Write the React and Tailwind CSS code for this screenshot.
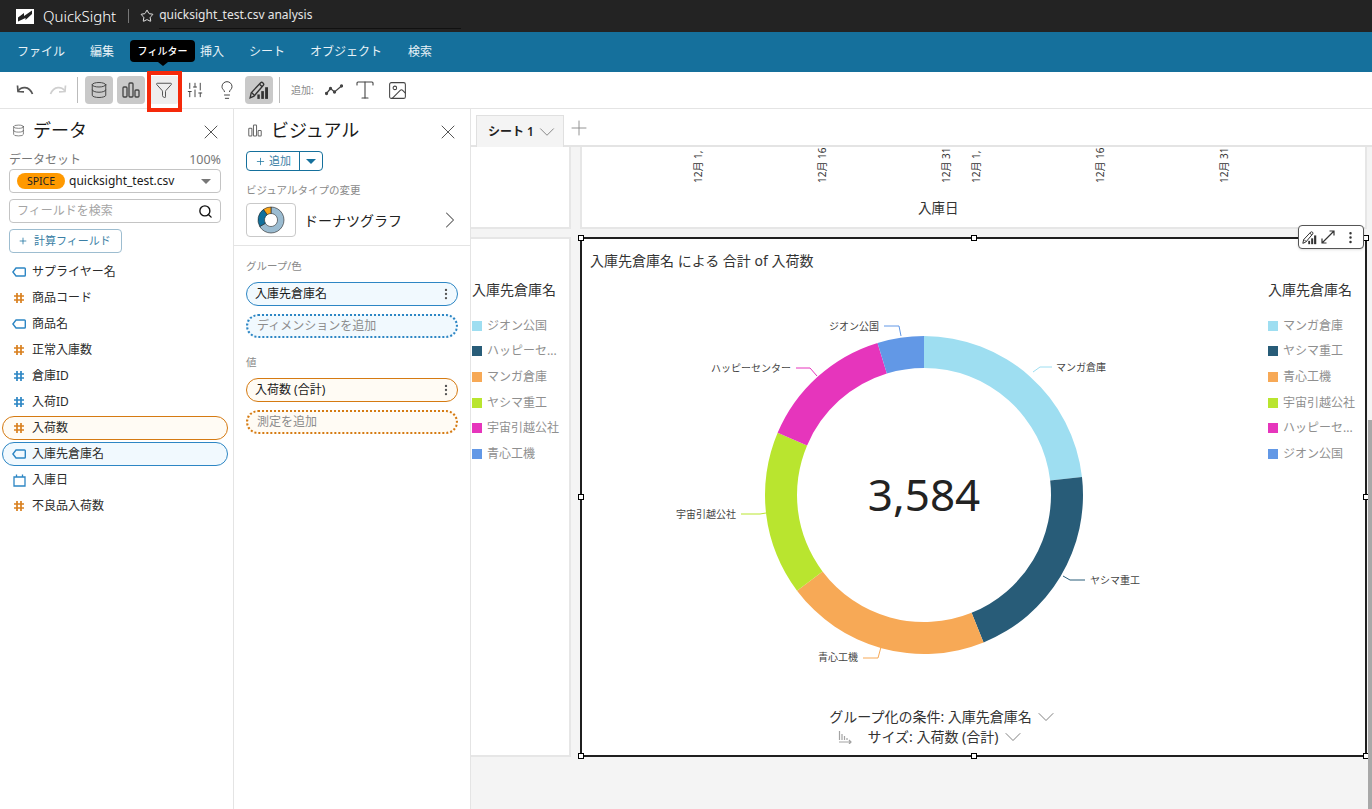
import { X, Search, ChevronRight, ChevronDown, Plus, Star, Database, Lightbulb, Image, Type, Funnel, SlidersVertical, MoreVertical } from "lucide-react";

const navItems = ["ファイル", "編集", "データ", "挿入", "シート", "オブジェクト", "検索"];

const fields = [
  { name: "サプライヤー名", type: "tag" },
  { name: "商品コード", type: "hash", color: "orange" },
  { name: "商品名", type: "tag" },
  { name: "正常入庫数", type: "hash", color: "orange" },
  { name: "倉庫ID", type: "hash", color: "blue" },
  { name: "入荷ID", type: "hash", color: "blue" },
  { name: "入荷数", type: "hash", color: "orange", active: "orange" },
  { name: "入庫先倉庫名", type: "tag", active: "blue" },
  { name: "入庫日", type: "date" },
  { name: "不良品入荷数", type: "hash", color: "orange" },
];

const MANGA = "#9edef1";
const YASHIMA = "#285c78";
const SEISHIN = "#f7a956";
const UCHU = "#b9e52f";
const HAPPY = "#e635bc";
const ZION = "#6298e6";

const leftLegend = [
  { label: "ジオン公国", swatch: "bg-[#9edef1]" },
  { label: "ハッピーセ...", swatch: "bg-[#285c78]" },
  { label: "マンガ倉庫", swatch: "bg-[#f7a956]" },
  { label: "ヤシマ重工", swatch: "bg-[#b9e52f]" },
  { label: "宇宙引越公社", swatch: "bg-[#e635bc]" },
  { label: "青心工機", swatch: "bg-[#6298e6]" },
];

const rightLegend = [
  { label: "マンガ倉庫", swatch: "bg-[#9edef1]" },
  { label: "ヤシマ重工", swatch: "bg-[#285c78]" },
  { label: "青心工機", swatch: "bg-[#f7a956]" },
  { label: "宇宙引越公社", swatch: "bg-[#b9e52f]" },
  { label: "ハッピーセ...", swatch: "bg-[#e635bc]" },
  { label: "ジオン公国", swatch: "bg-[#6298e6]" },
];

// angles are degrees clockwise from 12 o'clock
const segments = [
  { from: 0, to: 83.5, color: MANGA },
  { from: 83.5, to: 158, color: YASHIMA },
  { from: 158, to: 233, color: SEISHIN },
  { from: 233, to: 293, color: UCHU },
  { from: 293, to: 343, color: HAPPY },
  { from: 343, to: 360, color: ZION },
];

const callouts = [
  { label: "マンガ倉庫", x: 1056, y: 367, anchor: "start", points: "1033,372 1040,367 1052,367", color: MANGA },
  { label: "ヤシマ重工", x: 1090, y: 580, anchor: "start", points: "1063,576 1070,580 1085,580", color: YASHIMA },
  { label: "青心工機", x: 858, y: 657, anchor: "end", points: "863,658 878,658 881,647", color: SEISHIN },
  { label: "宇宙引越公社", x: 736, y: 514, anchor: "end", points: "741,514 760,514 766,513", color: UCHU },
  { label: "ハッピーセンター", x: 791, y: 368, anchor: "end", points: "796,368 810,368 817,376", color: HAPPY },
  { label: "ジオン公国", x: 879, y: 326, anchor: "end", points: "884,326 899,326 901,336", color: ZION },
];

function arc(cx, cy, outer, inner, from, to) {
  const pt = (r, a) => {
    const rad = ((a - 90) * Math.PI) / 180;
    return `${(cx + r * Math.cos(rad)).toFixed(2)} ${(cy + r * Math.sin(rad)).toFixed(2)}`;
  };
  const large = to - from > 180 ? 1 : 0;
  return `M${pt(outer, from)} A${outer} ${outer} 0 ${large} 1 ${pt(outer, to)} L${pt(inner, to)} A${inner} ${inner} 0 ${large} 0 ${pt(inner, from)} Z`;
}

function TagIcon() {
  return (
    <svg width="14" height="10" viewBox="0 0 14 10" fill="none" stroke="#2d86c4" strokeWidth="1.4" className="shrink-0">
      <path d="M4 1h8.500a.8.8 0 0 1 .8.8v6.400a.8.8 0 0 1-.8.8H4L.9 5z" />
    </svg>
  );
}

function HashIcon({ color }) {
  const stroke = color === "orange" ? "#d9801f" : "#2d86c4";
  return (
    <svg width="12" height="12" viewBox="0 0 12 12" fill="none" stroke={stroke} strokeWidth="1.7" className="shrink-0">
      <path d="M4 1v10M8 1v10M1 4h10M1 8h10" />
    </svg>
  );
}

function DateIcon() {
  return (
    <svg width="13" height="13" viewBox="0 0 13 13" fill="none" stroke="#2d86c4" strokeWidth="1.3" className="shrink-0">
      <path d="M1 3h11v9H1zM3.500 .5v3M9.500 .5v3" />
    </svg>
  );
}

function BarsIcon({ width = 18, height = 16, color = "#444" }) {
  return (
    <svg width={width} height={height} viewBox="0 0 18 16" fill="none" stroke={color} strokeWidth="1.3">
      <rect x="1" y="5" width="4" height="10" rx="1" />
      <rect x="7" y="1" width="4" height="14" rx="1" />
      <rect x="13" y="8" width="4" height="7" rx="1" />
    </svg>
  );
}

function BrushBarsIcon({ size = 20 }) {
  return (
    <svg width={size} height={size} viewBox="0 0 18 18" fill="none" stroke="#333" strokeWidth="1.2">
      <path d="M1 16l1-4.500L10.500 2.500c1.200-1.200 3.600.8 2.400 2.200L4.500 14.500z" />
      <path d="M2.500 11.500l2.500 2.500M9.500 3.800l2.300 2.200" />
      <rect x="7.500" y="13" width="2.200" height="4" fill="#333" stroke="none" />
      <rect x="11" y="10" width="2.400" height="7" fill="#333" stroke="none" />
      <rect x="14.500" y="6.500" width="2.600" height="10.500" fill="#333" stroke="none" />
    </svg>
  );
}

function LineChartIcon() {
  return (
    <svg width="18" height="12" viewBox="0 0 18 12" fill="none" stroke="#444" strokeWidth="1.3">
      <path d="M1.500 9.500l4-5 4 3.500 7-6" />
      <circle cx="1.500" cy="9.500" r="1" fill="#444" />
      <circle cx="5.500" cy="4.500" r="1" fill="#444" />
      <circle cx="9.500" cy="8" r="1" fill="#444" />
      <circle cx="16.500" cy="2" r="1" fill="#444" />
    </svg>
  );
}

function UndoIcon() {
  return (
    <svg width="18" height="14" viewBox="0 0 18 14" fill="none" stroke="#555" strokeWidth="1.7">
      <path d="M2 8C5 3.500 13 2.500 16.500 11" />
      <path d="M1.500 2.500l.5 6 6 .3" />
    </svg>
  );
}

function RedoIcon() {
  return (
    <svg width="18" height="14" viewBox="0 0 18 14" fill="none" stroke="#cfcfcf" strokeWidth="1.7">
      <path d="M16 8C13 3.500 5 2.500 1.500 11" />
      <path d="M16.500 2.500l-.5 6-6 .3" />
    </svg>
  );
}

function Logo() {
  return (
    <svg width="18" height="15" viewBox="0 0 18 15">
      <rect width="18" height="15" fill="#fff" />
      <path d="M2 12.500V8.500L8 4v3l8-5.500v3.500L9.500 11V9z" fill="#232323" />
    </svg>
  );
}

function DonutThumb() {
  return (
    <svg width="28" height="28" viewBox="0 0 28 28">
      <path d={arc(14, 14, 13, 6.5, 0, 240)} fill="#9bbcd1" stroke="#222" strokeWidth="0.6" />
      <path d={arc(14, 14, 13, 6.5, 240, 325)} fill="#11709c" stroke="#222" strokeWidth="0.6" />
      <path d={arc(14, 14, 13, 6.5, 325, 360)} fill="#f9a51a" stroke="#222" strokeWidth="0.6" />
    </svg>
  );
}

function FieldRow({ field }) {
  const pill =
    field.active === "orange"
      ? "border-[#d57a12] bg-[#fffbf4] rounded-full"
      : field.active === "blue"
      ? "border-[#2d86c4] bg-[#f1f9fe] rounded-full"
      : "border-transparent";
  return (
    <div className={`h-[24px] mb-[2px] w-[226px] ml-[2px] flex items-center gap-[6px] pl-[9px] border ${pill}`}>
      <span className="w-[14px] flex justify-center">
        {field.type === "tag" && <TagIcon />}
        {field.type === "hash" && <HashIcon color={field.color} />}
        {field.type === "date" && <DateIcon />}
      </span>
      <span className="text-[12px] text-[#2b2b2b]">{field.name}</span>
    </div>
  );
}

function Well({ label, tone }) {
  const cls = tone === "orange" ? "border-[#d57a12] bg-[#fffbf4]" : "border-[#2d86c4] bg-[#f1f9fe]";
  return (
    <div className={`h-[24px] w-[212px] rounded-full border flex items-center justify-between pl-[8px] pr-[4px] ${cls}`}>
      <span className="text-[12px] text-[#1a1a1a]">{label}</span>
      <MoreVertical size={14} strokeWidth={2} className="text-[#555]" />
    </div>
  );
}

function DropWell({ label, tone }) {
  const cls = tone === "orange" ? "border-[#d57a12] bg-[#fffbf4]" : "border-[#2d86c4] bg-[#f1f9fe]";
  return (
    <div className={`h-[24px] w-[212px] rounded-full border-2 border-dotted flex items-center pl-[9px] ${cls}`}>
      <span className="text-[12px] text-[#8c8c8c]">{label}</span>
    </div>
  );
}

function Legend({ items }) {
  return (
    <div>
      <div className="text-[14px] leading-[20px] text-[#333] mb-[13px]">入庫先倉庫名</div>
      {items.map((item) => (
        <div key={item.label} className="h-[25.6px] flex items-center gap-[5px]">
          <span className={`w-[10px] h-[10px] shrink-0 ${item.swatch}`} />
          <span className="text-[12px] text-[#8f8f8f] whitespace-nowrap">{item.label}</span>
        </div>
      ))}
    </div>
  );
}

function Handle({ className }) {
  return <span className={`absolute w-[6px] h-[6px] bg-white border border-black ${className}`} />;
}

function Tick({ className, children }) {
  return (
    <span className={`absolute top-[-20px] h-[56px] flex items-center text-[10px] text-[#333] [writing-mode:vertical-rl] [text-orientation:sideways] rotate-180 justify-start whitespace-nowrap ${className}`}>
      {children}
    </span>
  );
}

export default function App() {
  return (
    <div className="w-[1372px] h-[809px] overflow-hidden flex flex-col relative bg-white [font-family:'Noto_Sans','Noto_Sans_CJK_JP',sans-serif]">
      {/* top bar */}
      <div className="h-[32px] shrink-0 bg-[#232323] flex items-center text-white">
        <span className="ml-[16px]">
          <Logo />
        </span>
        <span className="ml-[9px] text-[15px] font-light">QuickSight</span>
        <span className="ml-[12px] w-px h-[14px] bg-[#777]" />
        <Star size={14} strokeWidth={1.5} className="ml-[11px]" />
        <div className="ml-[5px] w-[302px] h-[26px] pt-[2px] border-b border-[#111] text-[12px] leading-[20px] text-[#e6e6e6]">quicksight_test.csv analysis</div>
      </div>

      {/* menu, the third item sits under the tooltip */}
      <div className="h-[40px] shrink-0 bg-[#15709c] flex items-center gap-[25px] pl-[17px] text-[12px] text-[#e8f2f7]">
        {navItems.map((item) => (
          <span key={item} className={item === "データ" ? "invisible" : "last:ml-px"}>
            {item}
          </span>
        ))}
      </div>

      {/* toolbar */}
      <div className="h-[37px] shrink-0 bg-white border-b border-[#e4e4e4] flex items-center pl-[16px] text-[#444]">
        <UndoIcon />
        <span className="ml-[15px]">
          <RedoIcon />
        </span>
        <span className="ml-[10px] w-px h-[26px] bg-[#bbb]" />
        <span className="ml-[7px] w-[28px] h-[28px] rounded-[4px] bg-[#c9c9c9] flex items-center justify-center">
          <Database size={18} strokeWidth={1.3} />
        </span>
        <span className="ml-[4px] w-[28px] h-[28px] rounded-[4px] bg-[#c9c9c9] flex items-center justify-center">
          <BarsIcon />
        </span>
        <span className="ml-[5px] w-[28px] h-[28px] rounded-[2px] bg-[#eeeeee] flex items-center justify-center">
          <Funnel size={18} strokeWidth={1.2} />
        </span>
        <SlidersVertical size={18} strokeWidth={1.3} className="ml-[8px]" />
        <Lightbulb size={20} strokeWidth={1.2} className="ml-[13px]" />
        <span className="ml-[8px] w-[28px] h-[28px] rounded-[4px] bg-[#c9c9c9] flex items-center justify-center">
          <BrushBarsIcon />
        </span>
        <span className="ml-[6px] w-px h-[26px] bg-[#bbb]" />
        <span className="ml-[11px] text-[10px] text-[#8a8a8a]">追加:</span>
        <span className="ml-[11px]">
          <LineChartIcon />
        </span>
        <Type size={24} strokeWidth={1.1} className="ml-[10px]" />
        <Image size={21} strokeWidth={1.2} className="ml-[10px]" />
      </div>

      {/* body */}
      <div className="flex-1 min-h-0 flex">
        {/* data panel */}
        <aside className="w-[234px] shrink-0 border-r border-[#e4e4e4] pt-[8px]">
          <div className="flex items-center h-[26px] pl-[12px] pr-[10px]">
            <Database size={13} strokeWidth={1.3} className="text-[#555]" />
            <span className="ml-[8px] text-[18px] text-[#1a1a1a]">データ</span>
            <X size={24} strokeWidth={1} className="ml-auto mt-[3px] text-[#555]" />
          </div>
          <div className="ml-[9px] w-[212px] mt-[8px] flex justify-between items-center h-[18px] text-[12px] text-[#777]">
            <span>データセット</span>
            <span className="text-[12.500px]">100%</span>
          </div>
          <div className="ml-[9px] w-[212px] h-[24px] rounded-[4px] border border-[#c4c4c4] flex items-center pl-[7px] pr-[9px]">
            <span className="w-[48px] h-[16px] rounded-full bg-[#ff9900] text-[10.500px] leading-[16px] text-center text-[#222]">SPICE</span>
            <span className="ml-[4px] text-[12px] text-[#1a1a1a]">quicksight_test.csv</span>
            <span className="ml-auto w-0 h-0 border-x-[5.500px] border-x-transparent border-t-[5px] border-t-[#777]" />
          </div>
          <div className="ml-[9px] mt-[6px] w-[212px] h-[24px] rounded-[4px] border border-[#c4c4c4] flex items-center justify-between pl-[7px] pr-[7px]">
            <span className="text-[12px] text-[#a5a5a5]">フィールドを検索</span>
            <Search size={15} strokeWidth={2.2} className="text-[#111]" />
          </div>
          <div className="ml-[9px] mt-[6px] w-[113px] h-[24px] rounded-[4px] border border-[#9dbdd0] flex items-center pl-[8px]">
            <Plus size={10} strokeWidth={1.8} className="text-[#15709c]" />
            <span className="ml-[6px] text-[11px] text-[#3b7fa5]">計算フィールド</span>
          </div>
          <div className="mt-[7px]">
            {fields.map((field) => (
              <FieldRow key={field.name} field={field} />
            ))}
          </div>
        </aside>

        {/* visual panel */}
        <aside className="w-[237px] shrink-0 border-r border-[#e4e4e4] pt-[8px]">
          <div className="flex items-center h-[26px] pl-[14px] pr-[10px]">
            <BarsIcon width={14} height={13} color="#666" />
            <span className="ml-[9px] text-[18px] text-[#1a1a1a]">ビジュアル</span>
            <X size={24} strokeWidth={1} className="ml-auto mt-[3px] text-[#555]" />
          </div>
          <div className="ml-[12px] mt-[8px] w-[77px] h-[20px] rounded-[4px] border border-[#15709c] flex items-center">
            <span className="w-[53px] h-full flex items-center justify-center gap-[3px] border-r border-[#15709c]">
              <Plus size={11} strokeWidth={1.6} className="text-[#15709c]" />
              <span className="text-[11px] text-[#3b7fa5]">追加</span>
            </span>
            <span className="flex-1 flex justify-center">
              <span className="w-0 h-0 border-x-[5px] border-x-transparent border-t-[5px] border-t-[#15709c]" />
            </span>
          </div>
          <div className="ml-[12px] mt-[11px] text-[10.5px] leading-[16px] text-[#8a8a8a]">ビジュアルタイプの変更</div>
          <div className="ml-[12px] mt-[5px] pr-[6px] flex items-center">
            <span className="w-[50px] h-[34px] rounded-[4px] border border-[#c9c9c9] flex items-center justify-center">
              <DonutThumb />
            </span>
            <span className="ml-[8px] text-[14px] text-[#222]">ドーナツグラフ</span>
            <ChevronRight size={28} strokeWidth={0.9} className="ml-auto text-[#555]" />
          </div>
          <div className="h-[8px]" />
          <div className="border-t border-[#e4e4e4] pl-[12px]">
            <div className="mt-[12px] text-[10.5px] leading-[16px] text-[#8a8a8a]">グループ/色</div>
            <div className="mt-[8px] flex flex-col gap-[8px]">
              <Well label="入庫先倉庫名" tone="blue" />
              <DropWell label="ディメンションを追加" tone="blue" />
            </div>
            <div className="mt-[16px] text-[10.5px] leading-[16px] text-[#8a8a8a]">値</div>
            <div className="mt-[8px] flex flex-col gap-[8px]">
              <Well label="入荷数 (合計)" tone="orange" />
              <DropWell label="測定を追加" tone="orange" />
            </div>
          </div>
        </aside>

        {/* canvas */}
        <main className="flex-1 min-w-0 bg-[#f4f4f4] flex flex-col">
          <div className="h-[38px] shrink-0 bg-white border-b-2 border-[#e4e4e4] flex items-end pl-[5px]">
            <div className="w-[88px] h-[32px] -mb-[2px] bg-[#f4f4f4] border border-b-0 border-[#e0e0e0] flex items-center pl-[11px]">
              <span className="text-[12px] font-semibold text-[#222]">シート 1</span>
              <ChevronDown size={26} strokeWidth={0.8} className="text-[#777]" />
            </div>
            <Plus size={24} strokeWidth={0.9} className="ml-[3px] mb-[5px] text-[#888]" />
          </div>

          <div className="grid grid-cols-[100px_787px] grid-rows-[82px_520px] gap-x-[9px] gap-y-[8px]">
            <div className="bg-white border-r-[2px] border-b-[2px] border-[#e6e6e6]" />
            <div className="relative overflow-hidden bg-white border-l-[2px] border-r-[2px] border-b-[2px] border-[#e6e6e6]">
              <Tick className="left-[109px]">12月 1,</Tick>
              <Tick className="left-[233px]">12月 16</Tick>
              <Tick className="left-[357px]">12月 31</Tick>
              <Tick className="left-[387px]">12月 1,</Tick>
              <Tick className="left-[511px]">12月 16</Tick>
              <Tick className="left-[635px]">12月 31</Tick>
              <div className="absolute left-[336px] top-[51px] text-[13.500px] text-[#333]">入庫日</div>
            </div>

            <div className="bg-white border-r-[2px] border-b-[2px] border-t-[2px] border-[#e6e6e6] pl-[1px] pt-[41px]">
              <Legend items={leftLegend} />
            </div>

            {/* selected visual */}
            <div className="relative bg-white border-2 border-[#1f1f1f] flex flex-col">
              <div className="h-[41px] shrink-0 pl-[8px] pt-[12px] text-[14px] leading-[20px] text-[#333]">入庫先倉庫名 による 合計 of 入荷数</div>
              <div className="flex-1 flex min-h-0">
                <div className="w-[686px] shrink-0 flex flex-col items-center">
                  <svg width="520" height="370" viewBox="665 310 520 370" className="mt-[30px] shrink-0">
                    {segments.map((s) => (
                      <path key={s.color} d={arc(924, 495, 159, 127, s.from, s.to)} fill={s.color} />
                    ))}
                    {callouts.map((c) => (
                      <g key={c.label}>
                        <polyline points={c.points} fill="none" stroke={c.color} strokeWidth="1" />
                        <text x={c.x} y={c.y + 3.5} textAnchor={c.anchor} fontSize="10" fill="#444">
                          {c.label}
                        </text>
                      </g>
                    ))}
                    <text x="924" y="511" textAnchor="middle" fontSize="44" fill="#222">
                      3,584
                    </text>
                  </svg>
                  <div className="mt-[27px] ml-[39px] h-[20px] flex items-center text-[14px] leading-[20px] text-[#333]">
                    <span>グループ化の条件: 入庫先倉庫名</span>
                    <ChevronDown size={28} strokeWidth={0.8} className="text-[#777]" />
                  </div>
                  <div className="ml-[15px] h-[20px] flex items-center text-[14px] leading-[20px] text-[#333]">
                    <svg width="15" height="14" viewBox="0 0 15 14" fill="none" stroke="#a3a3a3" strokeWidth="1.2" className="mr-[14px]">
                      <path d="M1.500 1v9M4 4v6M6.500 6v4M9 8v2M1 12h12M11 10l2 2-2 2" />
                    </svg>
                    <span>サイズ: 入荷数 (合計)</span>
                    <ChevronDown size={28} strokeWidth={0.8} className="text-[#777]" />
                  </div>
                </div>
                <Legend items={rightLegend} />
              </div>

              <Handle className="left-[-4px] top-[-4px]" />
              <Handle className="left-[389px] top-[-4px]" />
              <Handle className="right-[-4px] top-[-4px]" />
              <Handle className="left-[-4px] top-[255px]" />
              <Handle className="right-[-4px] top-[255px]" />
              <Handle className="left-[-4px] bottom-[-4px]" />
              <Handle className="left-[389px] bottom-[-4px]" />
              <Handle className="right-[-4px] bottom-[-4px]" />

              <div className="absolute right-[1px] top-[-14px] w-[66px] h-[24px] rounded-[4px] border border-[#555] bg-white shadow-sm flex items-center pl-[3px] gap-[3px] text-[#333]">
                <BrushBarsIcon size={15} />
                <svg width="14" height="14" viewBox="0 0 14 14" fill="none" stroke="#333" strokeWidth="1.2" className="ml-[1px]">
                  <path d="M1 13l12-12M8.500 1H13v4.500M1 8.500V13h4.500" />
                </svg>
                <MoreVertical size={15} strokeWidth={2} className="ml-[5px]" />
              </div>
            </div>
          </div>
        </main>
      </div>

      {/* filter tooltip */}
      <div className="absolute left-[130px] top-[40px] w-[65px] h-[22px] rounded-[4px] bg-black flex items-center justify-center text-[10px] font-medium text-white">
        フィルター
      </div>
      <span className="absolute left-[158px] top-[62px] w-0 h-0 border-x-[5px] border-x-transparent border-t-[4px] border-t-black" />
      {/* highlight around the filter button */}
      <span className="absolute left-[147px] top-[71px] w-[35px] h-[41px] border-[4px] border-[#f5290a]" />
      <span className="absolute right-0 top-[420px] bottom-0 w-[4px] bg-[#a8a8a8]" />
    </div>
  );
}
